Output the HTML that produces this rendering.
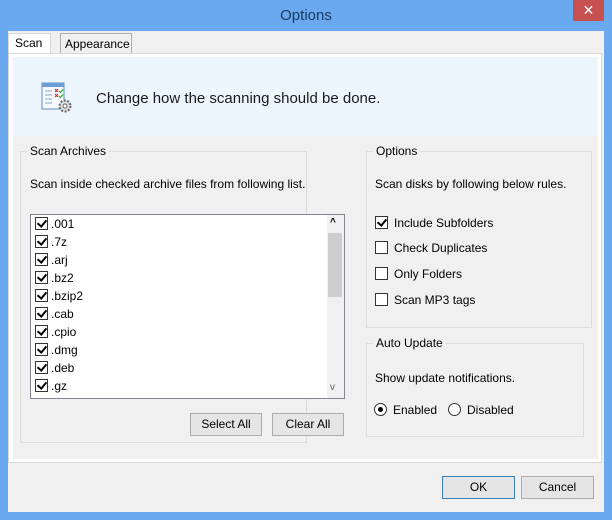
<!DOCTYPE html>
<html><head><style>
*{margin:0;padding:0;box-sizing:border-box}
body{width:612px;height:520px;background:#6aa8f0;font-family:"Liberation Sans",sans-serif;font-size:12px;color:#000;position:relative;overflow:hidden}
.a{position:absolute}
.grp{position:absolute;border:1px solid #dcdcdc}
.lg{position:absolute;background:#f0f0f0;padding:0 3px;top:-8px;left:6px;font-size:12px}
.btn{position:absolute;background:#e5e5e5;border:1px solid #acacac;text-align:center;line-height:21px;font-size:12px}
.cb{position:absolute;width:13px;height:13px;border:1px solid #333;background:#fff}
.cb.on::after{content:"";position:absolute;left:3px;top:0px;width:4px;height:7px;border:solid #000;border-width:0 2px 2px 0;transform:rotate(40deg)}
.row{position:absolute;left:4px;height:18px}
.row .cb{left:0;top:2px}
.row span{position:absolute;left:16px;top:2px}
</style></head><body>
<div class="a" style="left:0;top:0;width:612px;height:31px;text-align:center;line-height:31px;font-size:15px;color:#1e3a5a">Options</div>
<div class="a" style="left:573px;top:0;width:31px;height:21px;background:#c75050;color:#fff;text-align:center;line-height:20px;font-size:14px">✕</div>
<div class="a" style="left:8px;top:31px;width:596px;height:481px;background:#f0f0f0"></div>
<div class="a" style="left:8px;top:33px;width:43px;height:21px;background:#fff;border:1px solid #d9d9d9;border-bottom:none;padding:2px 0 0 6px">Scan</div>
<div class="a" style="left:60px;top:33px;width:72px;height:20px;background:#f0f0f0;border:1px solid #acacac;border-bottom:none;padding:3px 0 0 4px">Appearance</div>
<div class="a" style="left:8px;top:53px;width:594px;height:410px;background:#fff;border:1px solid #d9d9d9"></div>
<div class="a" style="left:13px;top:57px;width:585px;height:402px;background:#f0f0f0"></div>
<div class="a" style="left:13px;top:57px;width:585px;height:79px;background:#edf6ff"></div>
<svg class="a" style="left:40px;top:81px" width="34" height="34" viewBox="0 0 34 34">
<rect x="2" y="2" width="22" height="26" fill="#f6f9fd" stroke="#5b8fc6"/>
<rect x="2" y="2" width="22" height="4" fill="#6a9fd8"/>
<g stroke="#8aa6c4"><line x1="5" y1="10" x2="12" y2="10"/><line x1="5" y1="14" x2="12" y2="14"/><line x1="5" y1="18" x2="12" y2="18"/><line x1="5" y1="22" x2="12" y2="22"/></g>
<g stroke="#c33" stroke-width="1.2"><path d="M15 8l3 3M18 8l-3 3M15 13l3 3M18 13l-3 3"/></g>
<g stroke="#3a3" stroke-width="1.2" fill="none"><path d="M19 10l1.5 1.5 2.5-3M19 15l1.5 1.5 2.5-3"/></g>
<circle cx="25" cy="25" r="5.5" fill="#ddd" stroke="#666" stroke-width="2" stroke-dasharray="2 1.5"/>
<circle cx="25" cy="25" r="2" fill="#fff" stroke="#666"/>
</svg>
<div class="a" style="left:96px;top:90px;font-size:15px;color:#1a1a1a">Change how the scanning should be done.</div>

<div class="grp" style="left:20px;top:151px;width:287px;height:292px"><div class="lg">Scan Archives</div></div>
<div class="a" style="left:30px;top:177px">Scan inside checked archive files from following list.</div>
<div class="a" style="left:30px;top:214px;width:315px;height:185px;background:#fff;border:1px solid #828790;overflow:hidden">
<div class="row" style="top:0"><div class="cb on"></div><span>.001</span></div>
<div class="row" style="top:18px"><div class="cb on"></div><span>.7z</span></div>
<div class="row" style="top:36px"><div class="cb on"></div><span>.arj</span></div>
<div class="row" style="top:54px"><div class="cb on"></div><span>.bz2</span></div>
<div class="row" style="top:72px"><div class="cb on"></div><span>.bzip2</span></div>
<div class="row" style="top:90px"><div class="cb on"></div><span>.cab</span></div>
<div class="row" style="top:108px"><div class="cb on"></div><span>.cpio</span></div>
<div class="row" style="top:126px"><div class="cb on"></div><span>.dmg</span></div>
<div class="row" style="top:144px"><div class="cb on"></div><span>.deb</span></div>
<div class="row" style="top:162px"><div class="cb on"></div><span>.gz</span></div>
<div class="a" style="left:296px;top:0;width:17px;height:183px;background:#f0f0f0"></div>
<div class="a" style="left:297px;top:18px;width:14px;height:64px;background:#cdcdcd"></div>
<div class="a" style="left:299px;top:2px;font-size:10px;font-weight:bold">^</div>
<div class="a" style="left:299px;top:167px;font-size:10px;color:#606060">v</div>
</div>
<div class="btn" style="left:190px;top:413px;width:72px;height:23px">Select All</div>
<div class="btn" style="left:272px;top:413px;width:72px;height:23px">Clear All</div>

<div class="grp" style="left:366px;top:151px;width:226px;height:177px"><div class="lg">Options</div></div>
<div class="a" style="left:375px;top:177px">Scan disks by following below rules.</div>
<div class="cb on" style="left:375px;top:216px"></div><div class="a" style="left:394px;top:216px">Include Subfolders</div>
<div class="cb" style="left:375px;top:241px"></div><div class="a" style="left:394px;top:241px">Check Duplicates</div>
<div class="cb" style="left:375px;top:267px"></div><div class="a" style="left:394px;top:267px">Only Folders</div>
<div class="cb" style="left:375px;top:293px"></div><div class="a" style="left:394px;top:293px">Scan MP3 tags</div>

<div class="grp" style="left:366px;top:343px;width:218px;height:94px"><div class="lg">Auto Update</div></div>
<div class="a" style="left:375px;top:371px">Show update notifications.</div>
<div class="a" style="left:374px;top:403px;width:13px;height:13px;border:1px solid #333;border-radius:50%;background:#fff"><div style="margin:3px;width:5px;height:5px;border-radius:50%;background:#000"></div></div>
<div class="a" style="left:393px;top:403px">Enabled</div>
<div class="a" style="left:448px;top:403px;width:13px;height:13px;border:1px solid #333;border-radius:50%;background:#fff"></div>
<div class="a" style="left:467px;top:403px">Disabled</div>

<div class="btn" style="left:442px;top:476px;width:73px;height:23px;border:1px solid #3c7fb1">OK</div>
<div class="btn" style="left:521px;top:476px;width:73px;height:23px">Cancel</div>
</body></html>
